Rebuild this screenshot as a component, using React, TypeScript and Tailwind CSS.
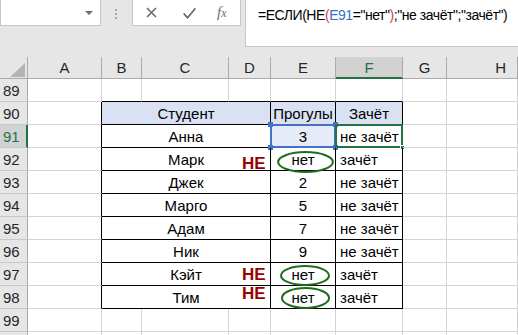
import React from "react";

const COLS = ["A", "B", "C", "D", "E", "F", "G", "H"];
const ROWS = [89, 90, 91, 92, 93, 94, 95, 96, 97, 98, 99, 100];

const students = [
  { name: "Анна", skip: "3", result: "не зачёт" },
  { name: "Марк", skip: "нет", result: "зачёт" },
  { name: "Джек", skip: "2", result: "не зачёт" },
  { name: "Марго", skip: "5", result: "не зачёт" },
  { name: "Адам", skip: "7", result: "не зачёт" },
  { name: "Ник", skip: "9", result: "не зачёт" },
  { name: "Кэйт", skip: "нет", result: "зачёт" },
  { name: "Тим", skip: "нет", result: "зачёт" },
];

// table spans columns B..F (1..5), rows 90..98
const inTable = (r: number, c: number) => r >= 90 && r <= 98 && c >= 1 && c <= 5;

function Cell({
  r,
  c,
  span = 1,
  children,
  align = "center",
  head = false,
}: {
  r: number;
  c: number;
  span?: number;
  children?: React.ReactNode;
  align?: "center" | "left";
  head?: boolean;
}) {
  const last = c + span - 1;
  const rightBlack = inTable(r, last) || inTable(r, last + 1);
  const bottomBlack = inTable(r, c) || inTable(r + 1, c);
  return (
    <div
      className={[
        "relative flex h-[23px] items-center border-r border-b text-[15px] leading-none whitespace-nowrap text-black",
        rightBlack ? "border-r-black" : "border-r-[#d4d4d4]",
        bottomBlack ? "border-b-black" : "border-b-[#d4d4d4]",
        align === "center" ? "justify-center" : "justify-start pl-[4px]",
        head ? "bg-[#d9e1f2]" : "",
        span === 3 ? "col-span-3" : "",
      ].join(" ")}
    >
      {children}
    </div>
  );
}

function RowHead({ n }: { n: number }) {
  const active = n === 91;
  return (
    <div
      className={[
        "flex h-[23px] items-center border-b border-b-[#c8c8c8] pl-[3px] text-[15px] leading-none",
        active
          ? "border-r-2 border-r-[#217346] bg-[#d2d2d2] text-[#217346]"
          : "border-r border-r-[#ababab] bg-[#e6e6e6] text-[#262626]",
      ].join(" ")}
    >
      {n < 100 ? n : null}
    </div>
  );
}

function Handle({ className }: { className: string }) {
  return <div className={`absolute size-[5px] bg-[#4472c4] ${className}`} />;
}

function Ellipse({ className }: { className: string }) {
  return (
    <svg className={`absolute ${className}`} viewBox="0 0 50 20" preserveAspectRatio="none">
      <ellipse cx="25" cy="10" rx="24" ry="9" fill="none" stroke="#1f6b1f" strokeWidth="2" vectorEffect="non-scaling-stroke" />
    </svg>
  );
}

function Toolbar() {
  return (
    <div className="flex h-[57px] items-start bg-[#e6e6e6]">
      <div className="flex h-[26px] w-[101px] shrink-0 items-center justify-end border border-t-0 border-[#c6c6c6] bg-white pr-[7px]">
        <div className="h-0 w-0 border-x-[4px] border-t-[4px] border-x-transparent border-t-[#6d6d6d]" />
      </div>
      <div className="mt-[9px] ml-[14px] flex shrink-0 flex-col gap-[2px]">
        <div className="size-[2px] bg-[#a6a6a6]" />
        <div className="size-[2px] bg-[#a6a6a6]" />
        <div className="size-[2px] bg-[#a6a6a6]" />
      </div>
      <div className="ml-[15px] flex h-[26px] w-[109px] shrink-0 items-center border border-t-0 border-[#c6c6c6] bg-white">
        <svg className="ml-[13px] size-[11px]" viewBox="0 0 11 11">
          <path d="M1 1 L10 10 M10 1 L1 10" stroke="#6d6d6d" strokeWidth="1.6" />
        </svg>
        <svg className="ml-[26px] size-[13px]" viewBox="0 0 13 13">
          <path d="M1 7 L4.5 11 L12 2 L12 3.5 L4.5 12.5 L1 8.5 Z" fill="#6d6d6d" stroke="#6d6d6d" strokeWidth="1" strokeLinejoin="round" />
        </svg>
        <span className="ml-[21px] font-['Liberation_Serif',serif] text-[15px] italic leading-none text-[#6d6d6d]">
          f<span className="text-[12px]">x</span>
        </span>
      </div>
      <div className="ml-[4px] flex h-[47px] min-w-0 flex-1 items-start overflow-hidden border-b border-l border-[#c6c6c6] bg-white pt-[5px] pl-[12px] text-[14px] leading-[20px] tracking-[-0.45px] whitespace-nowrap text-black">
        =ЕСЛИ(НЕ<span className="text-[#e0393e]">(</span>
        <span className="text-[#3a6fc4]">E91</span>="нет"<span className="text-[#e0393e]">)</span>;"не зачёт";"зачёт")
      </div>
    </div>
  );
}

export default function App() {
  return (
    <div className="h-[335px] w-[518px] overflow-hidden bg-white font-['Liberation_Sans',Arial,sans-serif]">
      <Toolbar />
      <div className="relative">
        <div className="grid grid-cols-[28px_74px_40px_87px_42px_65px_67px_44px_1fr]">
          {/* column headers */}
          <div className="relative h-[22px] border-r border-b border-r-[#ababab] border-b-[#ababab] bg-[#e6e6e6]">
            <svg className="absolute top-[6px] left-[10px]" width="15" height="14" viewBox="0 0 15 14">
              <path d="M15 0 L15 14 L0 14 Z" fill="#b4b4b4" />
            </svg>
          </div>
          {COLS.map((c) => (
            <div
              key={c}
              className={[
                "flex h-[22px] items-center border-r border-r-[#ababab] text-[15px] leading-none",
                c === "F"
                  ? "border-b-2 border-b-[#217346] bg-[#d2d2d2] text-[#217346]"
                  : "border-b border-b-[#ababab] bg-[#e6e6e6] text-[#262626]",
                c === "H" ? "justify-end pr-[11px]" : "justify-center",
              ].join(" ")}
            >
              {c}
            </div>
          ))}

          {ROWS.map((r) => {
            const s = r >= 91 && r <= 98 ? students[r - 91] : null;
            return (
              <React.Fragment key={r}>
                <RowHead n={r} />
                <Cell r={r} c={0} />
                {r === 90 ? (
                  <>
                    <Cell r={r} c={1} span={3} head>
                      Студент
                    </Cell>
                    <Cell r={r} c={4} head>
                      Прогулы
                    </Cell>
                    <Cell r={r} c={5} head>
                      Зачёт
                    </Cell>
                  </>
                ) : s ? (
                  <>
                    <Cell r={r} c={1} span={3}>
                      {s.name}
                    </Cell>
                    <Cell r={r} c={4}>
                      {r === 91 && (
                        <>
                          <div className="absolute -top-[1px] -left-[1px] h-[24px] w-[66px] border-2 border-[#4472c4] bg-[#e6ecf7]" />
                          <Handle className="-top-[3px] -left-[3px]" />
                          <Handle className="-top-[3px] -right-[3px]" />
                          <Handle className="-bottom-[3px] -left-[3px]" />
                          <Handle className="-right-[3px] -bottom-[3px]" />
                        </>
                      )}
                      <span className="relative">{s.skip}</span>
                    </Cell>
                    <Cell r={r} c={5} align="left">
                      {r === 91 && (
                        <>
                          <div className="absolute -top-[1px] -left-[1px] h-[24px] w-[68px] border-2 border-[#217346]" />
                          <div className="absolute -right-[3px] -bottom-[3px] size-[5px] border border-white bg-[#217346]" />
                        </>
                      )}
                      <span className="relative">{s.result}</span>
                    </Cell>
                  </>
                ) : (
                  <>
                    <Cell r={r} c={1} />
                    <Cell r={r} c={2} />
                    <Cell r={r} c={3} />
                    <Cell r={r} c={4} />
                    <Cell r={r} c={5} />
                  </>
                )}
                <Cell r={r} c={6} />
                <Cell r={r} c={7} />
              </React.Fragment>
            );
          })}
        </div>

        {/* annotations drawn over the sheet */}
        <span className="absolute top-[98px] left-[242px] text-[17px] leading-none font-bold text-[#990000]">НЕ</span>
        <span className="absolute top-[209px] left-[242px] text-[17px] leading-none font-bold text-[#990000]">НЕ</span>
        <span className="absolute top-[228px] left-[242px] text-[17px] leading-none font-bold text-[#990000]">НЕ</span>
        <Ellipse className="top-[94px] left-[277px] h-[22px] w-[57px]" />
        <Ellipse className="top-[208px] left-[280px] h-[21px] w-[50px]" />
        <Ellipse className="top-[230px] left-[281px] h-[22px] w-[49px]" />
      </div>
    </div>
  );
}
